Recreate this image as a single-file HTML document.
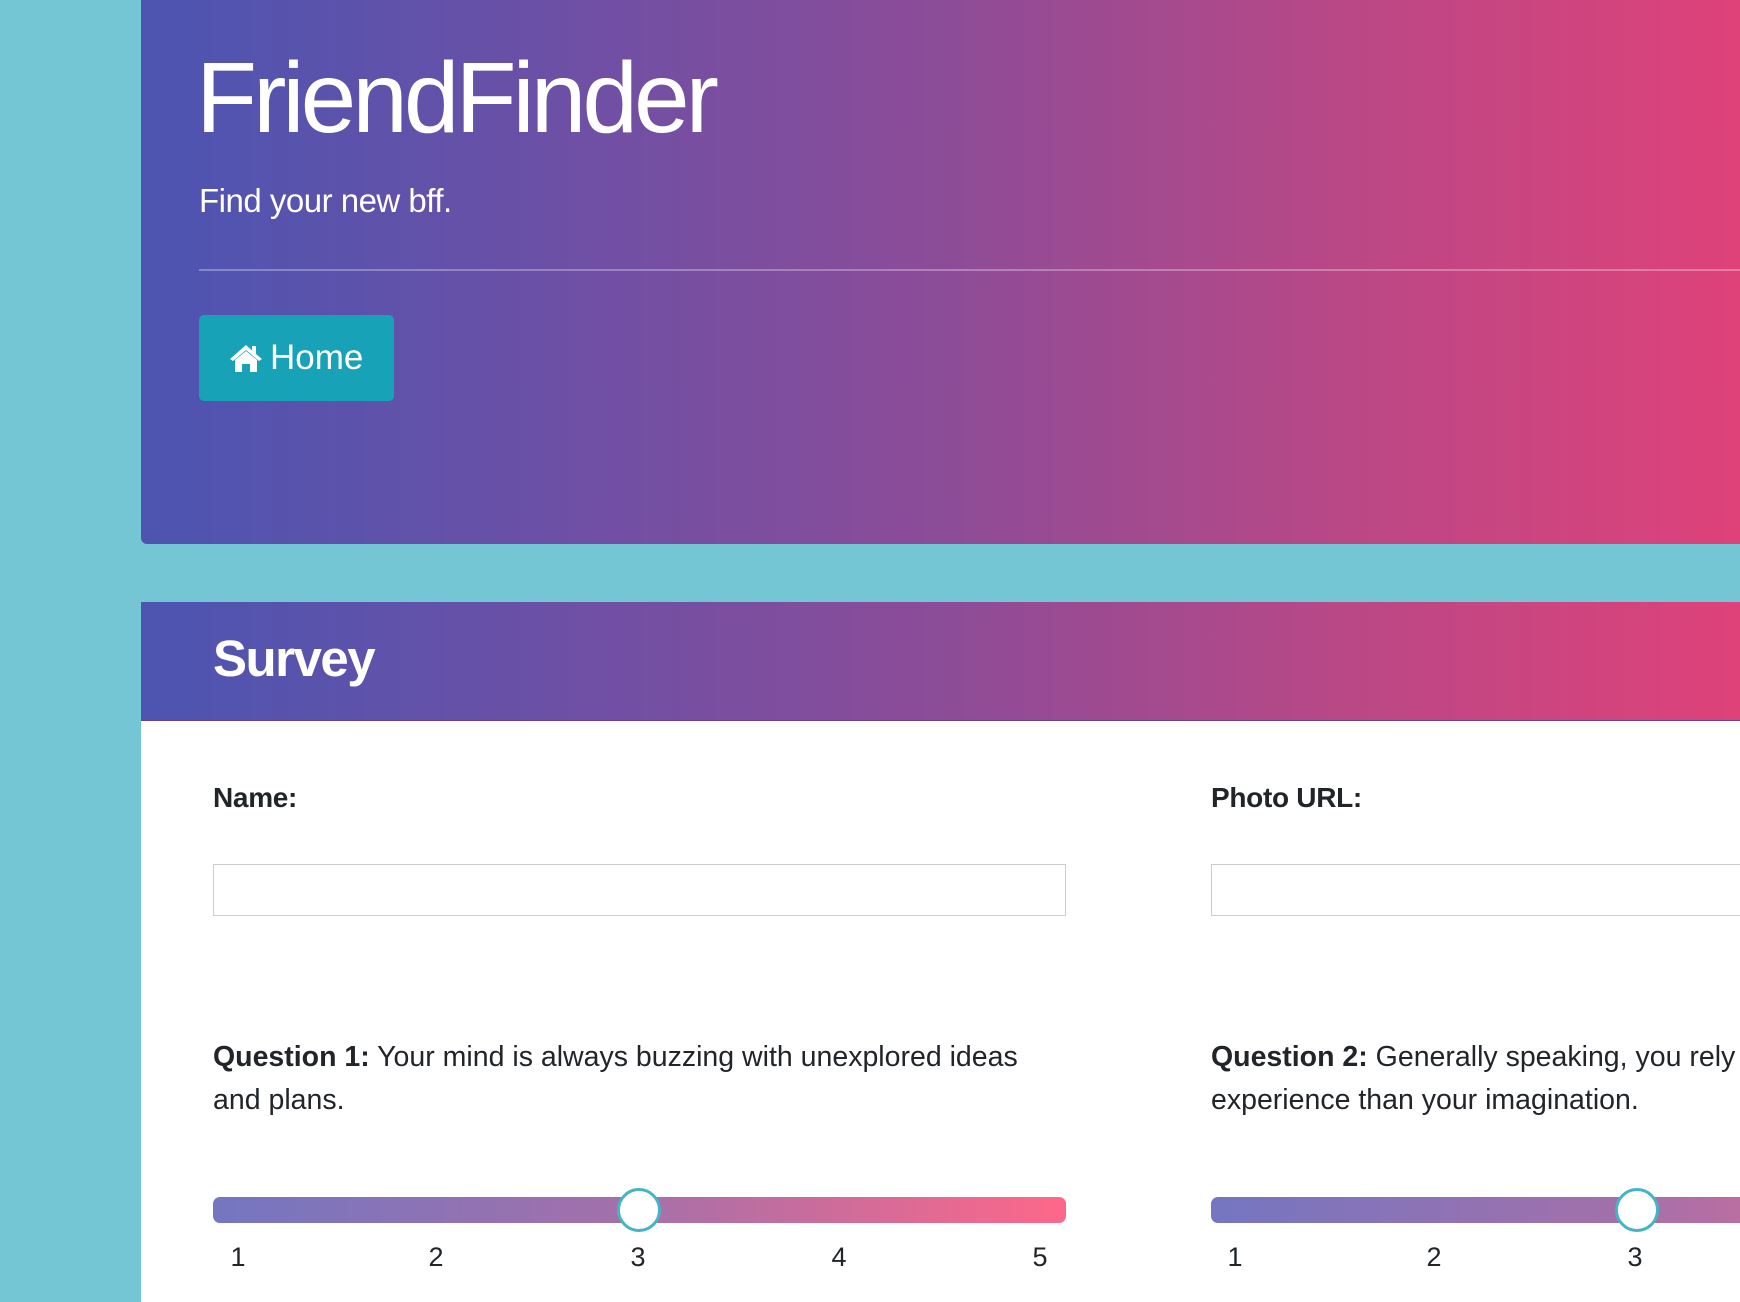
<!DOCTYPE html>
<html><head><meta charset="utf-8"><style>
html,body{margin:0;padding:0;width:1740px;height:1295px;overflow:hidden;background:#74c6d4;font-family:"Liberation Sans",Arial,sans-serif;}
.grad{background:linear-gradient(90deg,#4c55b1 0%,#6b50a6 25%,#8c4c98 50%,#b94886 75%,#de4279 100%);}
.jumbo{position:absolute;left:141px;top:0;width:1599px;height:544px;border-radius:0 0 0 6px;}
.title{position:absolute;left:196px;top:38px;font-size:100px;letter-spacing:-4px;color:#fff;font-weight:300;line-height:120px;}
.sub{position:absolute;left:199px;top:181px;font-size:33px;letter-spacing:-0.5px;color:#fff;line-height:40px;}
.hr{position:absolute;left:199px;top:269px;width:1541px;height:2px;background:rgba(255,255,255,0.3);}
.btn{position:absolute;left:199px;top:315px;width:195px;height:86px;background:#17a2b8;border-radius:5px;color:#fff;font-size:35px;line-height:86px;}
.btn span{position:absolute;left:71px;top:0;}
.btn svg{position:absolute;left:30px;top:28px;}
.card{position:absolute;left:141px;top:602px;width:1599px;height:700px;background:#fff;overflow:hidden;}
.head{position:absolute;left:0;top:0;width:1599px;height:118px;border-bottom:1px solid #6d3f8a;}
.head h2{position:absolute;left:72px;top:12px;margin:0;color:#fff;font-size:51px;letter-spacing:-1.5px;font-weight:bold;line-height:90px;}
.lbl{position:absolute;font-size:28px;font-weight:bold;color:#212529;letter-spacing:-0.3px;}
.inp{position:absolute;top:262px;height:52px;border:1px solid #ccc;box-sizing:border-box;background:#fff;}
.q{position:absolute;top:434px;font-size:28.5px;color:#212529;line-height:43px;white-space:nowrap;}
.track{position:absolute;top:595px;height:26px;border-radius:7px;background:linear-gradient(90deg,#7476c1,#a570a9 50%,#fe6789);}
.thumb{position:absolute;top:586px;width:38px;height:38px;border:3px solid #45b4c6;border-radius:50%;background:#fff;}
.n{position:absolute;top:640px;font-size:27px;color:#212529;width:30px;text-align:center;}
</style></head><body>
<div class="jumbo grad"></div>
<div class="title">FriendFinder</div>
<div class="sub">Find your new bff.</div>
<div class="hr"></div>
<div class="btn"><svg width="34" height="30" viewBox="0 0 34 30"><path d="M17 2 L1 16 L4 18 L17 7 L30 18 L33 16 L27 11 L27 3 L23 3 L23 7.5 Z" fill="#fff"/><path d="M6 17 L17 8 L28 17 L28 29 L21 29 L21 21 L13 21 L13 29 L6 29 Z" fill="#fff"/></svg><span>Home</span></div>
<div class="card">
 <div class="head grad"><h2>Survey</h2></div>
 <div class="lbl" style="left:72px;top:180px;">Name:</div>
 <div class="lbl" style="left:1070px;top:180px;">Photo URL:</div>
 <div class="inp" style="left:72px;width:853px;"></div>
 <div class="inp" style="left:1070px;width:700px;"></div>
 <div class="q" style="left:72px;"><b>Question 1:</b> Your mind is always buzzing with unexplored ideas<br>and plans.</div>
 <div class="q" style="left:1070px;"><b>Question 2:</b> Generally speaking, you rely more on your<br>experience than your imagination.</div>
 <div class="track" style="left:72px;width:853px;"></div>
 <div class="thumb" style="left:476px;"></div>
 <div class="n" style="left:82px;">1</div><div class="n" style="left:280px;">2</div><div class="n" style="left:482px;">3</div><div class="n" style="left:683px;">4</div><div class="n" style="left:884px;">5</div>
 <div class="track" style="left:1070px;width:853px;"></div>
 <div class="thumb" style="left:1474px;"></div>
 <div class="n" style="left:1079px;">1</div><div class="n" style="left:1278px;">2</div><div class="n" style="left:1479px;">3</div>
</div>
</body></html>
